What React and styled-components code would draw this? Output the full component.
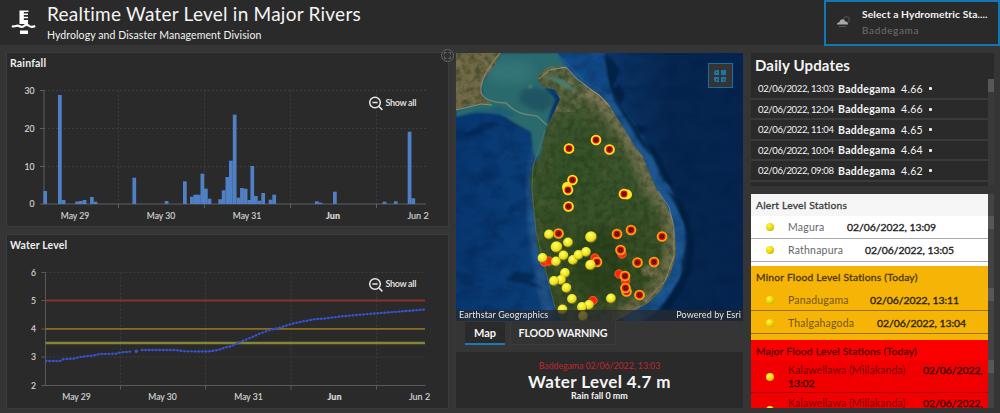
import React from "react";
import styled, { createGlobalStyle } from "styled-components";

const Global = createGlobalStyle`
  *{box-sizing:border-box}
  body{margin:0;background:#353535;overflow:hidden;font-family:Lato,"Open Sans",sans-serif;color:#f4f4f4}
`;
const Page = styled.div`width:1000px;height:413px;display:flex;flex-direction:column;background:#353535;overflow:hidden;`;
const Header = styled.header`height:45px;flex:none;background:#2a2a2a;display:flex;justify-content:space-between;`;
const Brand = styled.div`display:flex;padding:3px 0 0 11px;`;
const Titles = styled.div`padding-left:11px;`;
const Title = styled.h1`margin:0;font-size:19px;line-height:22px;font-weight:400;letter-spacing:.24px;white-space:nowrap;`;
const Subtitle = styled.div`margin-top:3px;font-size:10.5px;line-height:14px;white-space:nowrap;letter-spacing:.09px;`;
const Selector = styled.div`width:176px;height:46px;border:2px solid #1278b4;background:#2a2a2a;display:flex;position:relative;padding:5px 0 0 10px;`;
const SelectorText = styled.div`padding-left:11px;white-space:nowrap;`;
const SelectorTitle = styled.div`font-size:10.3px;line-height:15px;font-weight:700;letter-spacing:.1px;`;
const SelectorValue = styled.div`font-size:10px;line-height:16px;color:#6f6f6f;letter-spacing:.65px;`;

const Body = styled.main`flex:1;display:flex;gap:8px;padding:8px 6px 5px 7px;min-height:0;`;
const Column = styled.section`width:${p => p.$w}px;display:flex;flex-direction:column;flex:none;position:relative;`;
const Charts = styled(Column)`gap:9px;`;
const ChartPanel = styled.div`height:173px;background:#2a2a2a;outline:1px solid #3a3b3c;position:relative;`;
const Svg = styled.svg`display:block;flex:none;`;
const Expand = styled.span`position:absolute;right:-6px;top:-4px;width:13px;height:13px;`;

const MapBox = styled.div`height:268px;position:relative;overflow:hidden;`;
const Legend = styled.button`position:absolute;right:10px;top:10px;width:25px;height:25px;padding:4px;border:1.5px solid #176fa3;background:#343434;`;
const Attribution = styled.div`position:absolute;left:0;right:0;bottom:0;height:11px;background:rgba(40,42,45,.72);display:flex;justify-content:space-between;padding:0 2px 0 3px;font-size:9px;line-height:10px;color:#e6e6e6;letter-spacing:.1px;`;
const Tabs = styled.div`display:flex;height:24px;margin-top:1px;padding-left:9px;gap:5px;`;
const Tab = styled.div`height:23px;width:${p => p.$w}px;text-align:center;font-size:${p => p.$size || 11}px;line-height:21px;font-weight:700;letter-spacing:${p => p.$ls || 0}px;white-space:nowrap;background:${p => p.$on ? "#2a2a2a" : "#333"};border:solid #3c3c3c;border-width:0 1px 1px;${p => p.$on && "border:0;border-bottom:2px solid #1a78b6;"}`;
const Indicator = styled.div`margin-top:6px;height:56px;background:#2a2a2a;text-align:center;padding-top:9px;white-space:nowrap;`;
const Stamp = styled.div`font-size:8.7px;line-height:10px;color:#c3262b;letter-spacing:0;`;
const Level = styled.div`font-size:17px;line-height:21px;font-weight:700;letter-spacing:.38px;`;
const Rain = styled.div`font-size:9px;line-height:8px;font-weight:700;`;

const Daily = styled.div`height:133px;background:#2a2a2a;margin-bottom:8px;display:flex;flex-direction:column;`;
const DailyTitle = styled.div`height:26px;padding:3px 4px 0;font-size:15px;line-height:18px;font-weight:700;letter-spacing:.15px;`;
const Scroll = styled.div`flex:1;min-height:0;display:flex;`;
const List = styled.div`flex:1;overflow:hidden;`;
const Track = styled.div`width:6px;background:${p => p.$bg || "#393939"};padding-top:${p => p.$top || 0}px;`;
const Thumb = styled.div`height:13px;background:#575757;`;
const Update = styled.div`height:20.5px;border-bottom:2px solid #3a3a3a;padding:1px 0 0 7px;display:flex;align-items:center;font-size:10px;white-space:nowrap;`;
const UTime = styled.span`width:80px;font-size:9.5px;letter-spacing:-.36px;`;
const UName = styled.b`width:63px;font-size:10.5px;letter-spacing:.3px;`;
const UVal = styled.span`width:28px;letter-spacing:.3px;font-size:10.5px;`;
const Bullet = styled.i`width:3px;height:3px;border-radius:1px;background:#eee;`;

const Station = styled.div`height:${p => p.$h}px;margin-bottom:${p => p.$gap || 0}px;display:flex;overflow:hidden;`;
const StationList = styled.div`flex:1;background:${p => p.$bg};color:${p => p.$fg};overflow:hidden;`;
const StationTitle = styled.div`height:${p => p.$h}px;background:${p => p.$bg};padding:4px 5px 0;font-size:10.3px;line-height:15px;font-weight:400;letter-spacing:.2px;white-space:nowrap;-webkit-text-stroke:.3px;`;
const Row = styled.div`min-height:${p => p.$h}px;border-bottom:1.5px solid ${p => p.$line};display:flex;align-items:center;padding:1px 0 0 15px;font-size:10.5px;line-height:12.5px;`;
const Ball = styled.span`flex:none;width:8px;height:8px;border-radius:50%;background:radial-gradient(circle at 35% 30%,#fff54a,#e2d000 60%,#897f23);margin-right:14px;`;
const Label = styled.div`width:199px;`;
const Name = styled.span`display:inline-block;width:${p => p.$w}px;letter-spacing:${p => p.$ls}px;color:${p => p.$c};white-space:nowrap;`;
const When = styled.span`color:${p => p.$c};font-size:10.4px;-webkit-text-stroke:.35px;letter-spacing:-.02px;`;

const bars = [[43.3,191],[58,95],[61.7,200],[75.3,201.5],[79,201],[82.7,200],[90,197],[93.6,201.7],[132.4,177.7],[164.7,201],[183,181.3],[190,196.7],[193.5,194.7],[197,194.7],[200.5,173.7],[204,188.7],[207.6,198.7],[218.3,199.3],[221.8,190.3],[225.5,177],[229,160.7],[232.8,114.7],[236.6,197.7],[240.1,188],[243.7,188.7],[247.3,200],[250.4,166],[254,196],[257.6,200.7],[261.3,193],[268.7,199.7],[272.3,194.7],[315,201.3],[318.6,202.7],[333,191.7],[382.7,201.7],[393.9,201.3],[407.7,131.7],[411.4,198.3]];
const levelA = "46,361 60,361 63,359.2 75,358.5 80,357 93,355.5 100,354 116,353.7 119,352.7 131,351.5";
const levelB = "142,350 175,350 185,351.3 208,351.5 218,350 225,347.5 232,346 240,342 250,338 260,333.5 270,330 280,327.5 290,324.3 300,322 315,319.2 325,318.5 340,316.5 360,314.7 380,313 400,311.5 425,309.5";
const days = [["May 29", 75], ["May 30", 161], ["May 31", 247], ["Jun", 333], ["Jun 2", 418]];

function ShowAll({ y }) {
  return <g>
    <g fill="none" stroke="#e8e8e8" strokeWidth="1.5"><circle cx="375" cy={y} r="5.3" /><path d={`M379 ${y + 4}l3.4 3.4M372.4 ${y}h5.2`} /></g>
    <text x="385.5" y={y + 3} fontSize="9" fontWeight="700" fill="#ddd" textLength="31">Show all</text>
  </g>;
}
function Axis({ x, grid, ys, labels, dy, y0, right, vx }) {
  return <g>
    <g stroke="#3d3d3d" strokeDasharray="2 2">
      {ys.map(y => <path key={y} d={`M${x} ${y}H${right}`} />)}
      {vx.map(v => <path key={v} d={`M${v} ${ys[0]}V${y0}`} />)}
    </g>
    <g stroke={grid} fill="none">
      <path d={`M${x} ${ys[0]}V${y0}`} />
      <path d={`M${x - 4} ${y0}H${right}`} strokeWidth="1.2" />
      {ys.map(y => <path key={y} d={`M${x - 4} ${y}h4`} />)}
      {vx.map(v => <path key={v} d={`M${v} ${y0}v4`} />)}
    </g>
    <g fontSize="9" fill="#d4d4d4" stroke="#d4d4d4" strokeWidth=".15">
      {labels.map((l, i) => <text key={l} x={x - 9.5} y={[...ys, y0][i] + 3} textAnchor="end" fontSize="8.6">{l}</text>)}
      {days.map(([d, cx]) => <text key={d} x={cx + (x > 45 ? 1.5 : 0)} y={y0 + dy} textAnchor="middle" fontSize={d.startsWith("May") ? 8.6 : 9} fontWeight={d === "Jun" ? 900 : 400}>{d}</text>)}
    </g>
  </g>;
}
const coast = "M537 79L543 70L551 66L566 67L575 77L588 87L600 95L608 103L617 118L627 133L635 147L643 156L649 172L656 188L664 201L672 217L675 235L676 254L671 272L661 290L648 303L632 312L614 322H563L556 311L552 295L548 278L542 263L537 245L535 220L532 200L530 180L533 165L541 155L543 142L547 126L554 112L560 99L555 90L543 87Z";
const gauges = [[569,148.5],[596,140],[609.5,149.5],[572.5,180],[568,190],[568.5,206.5],[624,194],[558.5,233.5],[617,234],[631,230],[662,236.5],[620.5,250],[637.5,262.5],[654,262],[597,262],[625,276],[626.5,291.5],[625.5,288],[639.5,295]];
const yellows = [[549,234.5],[556.5,247,5.8],[568,242.5],[591,237,5.8],[542.5,258],[556,261.5],[563.5,255.5],[573,260],[578.5,255],[586,252],[590.5,265,5.2],[565,273],[561,280],[554,281],[566.5,288],[572,299],[562.5,309.5],[589,305],[582,307],[583,316],[611,298.5]];
const reds = [[544.5,262],[549,261],[595,258],[619,274],[622,254],[625.5,281],[593,300.5]];

function Satellite() {
  return <Svg width="287" height="268" viewBox="456 53 287 268">
    <defs>
      <linearGradient id="sea" x1="0" x2="1"><stop offset="0" stopColor="#07366f" /><stop offset=".26" stopColor="#0a3d77" /><stop offset=".55" stopColor="#0a3467" /><stop offset=".75" stopColor="#06264f" /><stop offset="1" stopColor="#052550" /></linearGradient>
      <linearGradient id="land" x1="0" y1="0" x2="0" y2="1"><stop offset="0" stopColor="#5f6a4a" /><stop offset=".2" stopColor="#465834" /><stop offset=".45" stopColor="#37522a" /><stop offset=".8" stopColor="#344b20" /><stop offset="1" stopColor="#3e4d2b" /></linearGradient>
      <radialGradient id="ball" cx=".42" cy=".34" r=".6"><stop offset="0" stopColor="#ffff88" /><stop offset=".45" stopColor="#f6ee2b" /><stop offset=".85" stopColor="#e6d51c" /><stop offset="1" stopColor="#8b831c" /></radialGradient>
      <filter id="b1" x="-30%" y="-30%" width="160%" height="160%"><feGaussianBlur stdDeviation="1" /></filter>
      <filter id="b2" x="-30%" y="-30%" width="160%" height="160%"><feGaussianBlur stdDeviation="2.2" /></filter>
      <filter id="b4" x="-40%" y="-40%" width="180%" height="180%"><feGaussianBlur stdDeviation="4" /></filter>
      <filter id="grain" x="0" y="0" width="100%" height="100%" colorInterpolationFilters="sRGB"><feTurbulence type="fractalNoise" baseFrequency=".16" numOctaves="4" seed="4" /><feColorMatrix values="0 0 0 0 .12  0 0 0 0 .2  0 0 0 0 .09  2.8 0 0 0 -1.15" /></filter>
      <filter id="tan" x="0" y="0" width="100%" height="100%" colorInterpolationFilters="sRGB"><feTurbulence type="fractalNoise" baseFrequency=".11" numOctaves="4" seed="9" /><feColorMatrix values="0 0 0 0 .56  0 0 0 0 .5  0 0 0 0 .36  0 2.8 0 0 -1.2" /></filter>
      <filter id="waves" x="0" y="0" width="100%" height="100%" colorInterpolationFilters="sRGB"><feTurbulence type="fractalNoise" baseFrequency=".05 .07" numOctaves="4" seed="2" /><feColorMatrix values="0 0 0 0 0  0 0 0 0 .1  0 0 0 0 .25  1.9 0 0 0 -.8" /></filter>
      <clipPath id="isle"><path d={coast} /></clipPath>
      <clipPath id="mainland"><path d="M456 53H501L494 66L484 79L481 88L483 98L492 103L480 105L466 106L456 111Z" /></clipPath>
    </defs>
    <rect x="456" y="53" width="287" height="268" fill="url(#sea)" />
    <path d="M556 50L605 98L640 150L665 200L678 235L676 265L655 300L625 322" fill="none" stroke="#1b558f" strokeWidth="20" filter="url(#b1)" />
    <path d="M558 53H606L611 95L585 80Z" fill="#114a87" />
    <path d="M545 120Q530 170 532 205Q535 255 551 322" fill="none" stroke="#215489" strokeWidth="11" filter="url(#b2)" />
    <rect x="456" y="53" width="287" height="268" filter="url(#waves)" opacity=".45" />
    <g fill="#041b3b" filter="url(#b1)" opacity=".75">
      <path d="M604 53L613 61L620 70L617 78L611 90L619 84L625 95L621 104L635 125L646 127L640 135L648 143L656 150L664 168L672 185L663 181L653 157L642 146L630 126L615 102L607 74Z" />
      <path d="M667 190L682 202L689 223L694 246L690 273L680 292L669 310L660 307L673 295L681 280L682 263L686 244L684 222L675 204Z" />
      <path d="M506 279L517 272L536 275L530 281L545 289L525 284Z" opacity=".7" /><path d="M461 137L482 124L500 122L486 130L470 136Z" opacity=".5" />
    </g>
    <path d="M456 111L483 98L481 84L493 66L501 53H557L566 68L545 89L555 99L547 123L547 145L538 158L534 155L531 132L516 124L500 114L476 112L456 117Z" fill="#2c6a6d" filter="url(#b1)" />
    <ellipse cx="510" cy="72" rx="24" ry="12" fill="#37787a" opacity=".7" filter="url(#b4)" />
    <path d="M522 90L535 87L549 92L554 103L543 112L529 108L519 101Z" fill="#1c4d60" opacity=".75" filter="url(#b2)" />
    <path d="M462 114L500 106L516 114L510 117L490 112Z" fill="#1d5d78" opacity=".8" filter="url(#b1)" />
    <circle cx="530.500" cy="86.500" r="2" fill="#4a806a" filter="url(#b1)" />
    <g clipPath="url(#mainland)"><rect x="456" y="53" width="60" height="60" fill="#6f6745" /><rect x="456" y="53" width="60" height="60" filter="url(#tan)" opacity=".4" /><rect x="456" y="53" width="60" height="60" filter="url(#grain)" opacity=".45" /></g>
    <path d="M500 53Q480 77 481 91Q482 102 506 103Q515 112 524 114L537 116L548 126" fill="none" stroke="#899477" strokeWidth="1.3" opacity=".7" />
    <path d="M456 110L481 104L492 105" fill="none" stroke="#889179" />
    <g clipPath="url(#isle)">
      <rect x="525" y="60" width="155" height="265" fill="url(#land)" />
      <rect x="525" y="60" width="155" height="52" filter="url(#tan)" opacity=".5" />
      <rect x="525" y="60" width="155" height="265" filter="url(#tan)" opacity=".15" />
      <path d="M590 87L617 117L636 149L650 182L670 212L675 250L660 292L614 323" fill="none" stroke="#8d8060" strokeWidth="18" opacity=".65" filter="url(#b4)" />
      <ellipse cx="650" cy="271" rx="9" ry="6" fill="#99856a" opacity=".55" filter="url(#b1)" />
      <ellipse cx="576" cy="155" rx="23" ry="40" fill="#2e5024" opacity=".5" filter="url(#b4)" />
      <ellipse cx="599" cy="264" rx="24" ry="35" fill="#223716" opacity=".5" filter="url(#b4)" />
      <rect x="525" y="60" width="155" height="265" filter="url(#grain)" opacity=".42" />
    </g>
    <path d="M546 76L563 80L577 91L566 88L554 81Z" fill="#487e71" filter="url(#b1)" />
    <path d="M539 79L549 70L566 67L577 79L600 96L610 107" fill="none" stroke="#aaa58a" strokeWidth="1" opacity=".7" />
    <path d="M658 191L669 207L674 227L674 256L665 281L645 302" fill="none" stroke="#b3a889" strokeWidth="1" opacity=".5" />
    <path d="M545 130L533 166L532 190L536 231L545 268L555 308" fill="none" stroke="#657f69" strokeWidth="1" opacity=".5" />
    <circle cx="567" cy="187" r="5" fill="#ffe51f" /><circle cx="627" cy="194.5" r="5" fill="#ffe51f" />
    {reds.map(([x, y], i) => <circle key={i} cx={x} cy={y} r="4.2" fill="#ff2418" stroke="#ff7b14" strokeWidth=".7" />)}
    {gauges.map(([x, y], i) => <g key={i}><circle cx={x} cy={y} r="4.4" fill="#dd0a08" stroke={y > 225 ? "#f5a414" : "#ffe21f"} strokeWidth="1.9" /><circle cx={x} cy={y} r="1.6" fill="#4a1205" stroke="#4c0805" /><circle cx={x} cy={y} r=".8" fill="#55601c" /></g>)}
    {yellows.map(([x, y, r = 4.9], i) => <circle key={i} cx={x} cy={y} r={r} fill="url(#ball)" />)}
  </Svg>;
}

export default function App() {
  return <><Global /><Page>
    <Header>
      <Brand>
        <Svg width="25" height="36" viewBox="11 3 25 36"><path fill="#fff" d="M19.5 10.5h9V12h-4.7v1.6h4.2v1.5h-4.2v1.7h4.2v1.5h-4.2v1.7h4.2v4h-8.5zM20 30.500h8v3.500h-8z" /><path d="M12 26c2.700 1.800 4.800-1.400 7 0s3.200 1.500 5 0 3.400-1.400 5.200 0 3.400 1.200 6 0" fill="none" stroke="#fff" strokeWidth="2.200" /></Svg>
        <Titles><Title>Realtime Water Level in Major Rivers</Title><Subtitle>Hydrology and Disaster Management Division</Subtitle></Titles>
      </Brand>
      <Selector>
        <Svg width="15" height="28" viewBox="0 0 15 28"><circle cx="10.500" cy="12.500" r="2.800" fill="none" stroke="#4a4a4a" strokeWidth="1.200" /><path d="M1 17.500c0-2 2-2.300 2.600-2.500C4 11.500 8.500 11.500 9 14.500c2 0 3 1 3 3z" fill="#aaa" /><path d="M3 19.500h7" stroke="#555" /></Svg>
        <SelectorText><SelectorTitle>Select a Hydrometric Sta....</SelectorTitle><SelectorValue>Baddegama</SelectorValue></SelectorText>
      </Selector>
    </Header>
    <Body>
      <Charts $w={441}>
        <ChartPanel>
          <Svg width="441" height="173" viewBox="7 53 441 173">
            <text x="10" y="67" fontSize="10.500" fontWeight="700" fill="#eee" textLength="36">Rainfall</text>
            <Axis x={44} grid="#5a5f63" ys={[90.5, 128.5, 166.5]} y0={204} labels={[30, 20, 10, 0]} dy={14.5} right={426} vx={[118.5, 204.5, 290.5, 376.5]} />
            {bars.map(([x, y]) => <rect key={x} x={x} y={y} width="3.750" height={204 - y} fill="#5080c4" />)}
            <ShowAll y={102.5} />
          </Svg>
          <Expand><Svg width="13" height="13" viewBox="0 0 13 13" fill="none" stroke="#666"><circle cx="6.500" cy="6.500" r="6" fill="#303030" /><path d="M3.500 5.500v-2h2M7.500 3.500h2v2M9.500 7.500v2h-2M5.500 9.500h-2v-2" /></Svg></Expand>
        </ChartPanel>
        <ChartPanel>
          <Svg width="441" height="173" viewBox="7 235 441 173">
            <text x="10" y="249" fontSize="10.500" fontWeight="700" fill="#eee" textLength="57">Water Level</text>
            <Axis x={45.5} grid="#5a5a5a" ys={[272.5, 300.5, 329, 357]} y0={385.5} labels={[6, 5, 4, 3, 2]} dy={14.5} right={425.5} vx={[120.5, 205.5, 291, 376.5]} />
            <path d="M45.500 300.500H425" stroke="#8a3228" strokeWidth="1.800" /><path d="M45.500 328.800H425" stroke="#8c6c22" strokeWidth="1.800" /><path d="M45.500 343H425" stroke="#858536" strokeWidth="2.400" />
            <g fill="none" stroke="#2f42a8" strokeWidth="1.300"><polyline points={levelA} /><polyline points={levelB} /></g>
            <g fill="none" stroke="#3a53c8" strokeWidth="2.400" strokeLinecap="round" strokeDasharray="0 3.55"><polyline points={levelA} /><polyline points={levelB} /></g>
            <circle cx="136.300" cy="351.300" r="1.700" fill="#3a53c8" />
            <ShowAll y={284} />
          </Svg>
        </ChartPanel>
      </Charts>
      <Column $w={287}>
        <MapBox><Satellite />
          <Legend><Svg width="14" height="14" viewBox="0 0 14 14" fill="#1b75a8"><path d="M1 2.500L3 1h3v5H1zM8 1h5v5H8zM1 8h5v5H2.500L1 11.500zM8 8h5v4l-1.500 1H8z" /><path d="M3 10h1.500v1.500H3zM10 10h1.500v1.500H10zM3 3h1v1H3z" fill="#333" /></Svg></Legend>
          <Attribution><span>Earthstar Geographics</span><span>Powered by Esri</span></Attribution>
        </MapBox>
        <Tabs><Tab $w={40} $on>Map</Tab><Tab $w={106} $size={10.7} $ls={-0.22}>FLOOD WARNING</Tab></Tabs>
        <Indicator><Stamp>Baddegama 02/06/2022, 13:03</Stamp><Level>Water Level 4.7 m</Level><Rain>Rain fall 0 mm</Rain></Indicator>
      </Column>
      <Column $w={243}>
        <Daily><DailyTitle>Daily Updates</DailyTitle>
          <Scroll><List>{[["13:03", "4.66"], ["12:04", "4.66"], ["11:04", "4.65"], ["10:04", "4.64"], ["09:08", "4.62"]].map(([t, v]) => <Update key={t}><UTime>02/06/2022, {t}</UTime><UName>Baddegama</UName><UVal>{v}</UVal><Bullet /></Update>)}</List><Track><Thumb /></Track></Scroll>
        </Daily>
        <Station $h={73}><StationList $bg="#fff" $fg="#3c3c3c"><StationTitle $h={22} $bg="#f6f6f6">Alert Level Stations</StationTitle>
          {[["Magura", "13:09", 59, .25], ["Rathnapura", "13:05", 77, .2]].map(([n, t, w, ls]) => <Row key={n} $h={23} $line="#aaa"><Ball /><Label><Name $c="#666" $w={w} $ls={ls}>{n}</Name><When $c="#222">02/06/2022, {t}</When></Label></Row>)}
        </StationList><Track $bg="#434343" $top={22}><Thumb /></Track></Station>
        <Station $h={74}><StationList $bg="#f6b506" $fg="#493708"><StationTitle $h={22} $bg="#f6b506">Minor Flood Level Stations (Today)</StationTitle>
          {[["Panadugama", "13:11", 82, .2], ["Thalgahagoda", "13:04", 89, .2]].map(([n, t, w, ls]) => <Row key={n} $h={23} $line="#99700a"><Ball /><Label><Name $c="#725510" $w={w} $ls={ls}>{n}</Name><When $c="#2b2208">02/06/2022, {t}</When></Label></Row>)}
        </StationList><Track $bg="#434343" $top={22}><Thumb /></Track></Station>
        <Station $h={68}><StationList $bg="#f00000" $fg="#560000"><StationTitle $h={20} $bg="#fa0000">Major Flood Level Stations (Today)</StationTitle>
          {[0, 1].map(k => <Row key={k} $h={33} $line="#aa0000"><Ball /><Label><Name $c="#7a0000" $w={135} $ls={.1}>Kalawellawa (Millakanda)</Name><When $c="#3c0000">02/06/2022, 13:02</When></Label></Row>)}
        </StationList><Track $bg="#434343" $top={20}><Thumb /></Track></Station>
      </Column>
    </Body>
  </Page></>;
}
